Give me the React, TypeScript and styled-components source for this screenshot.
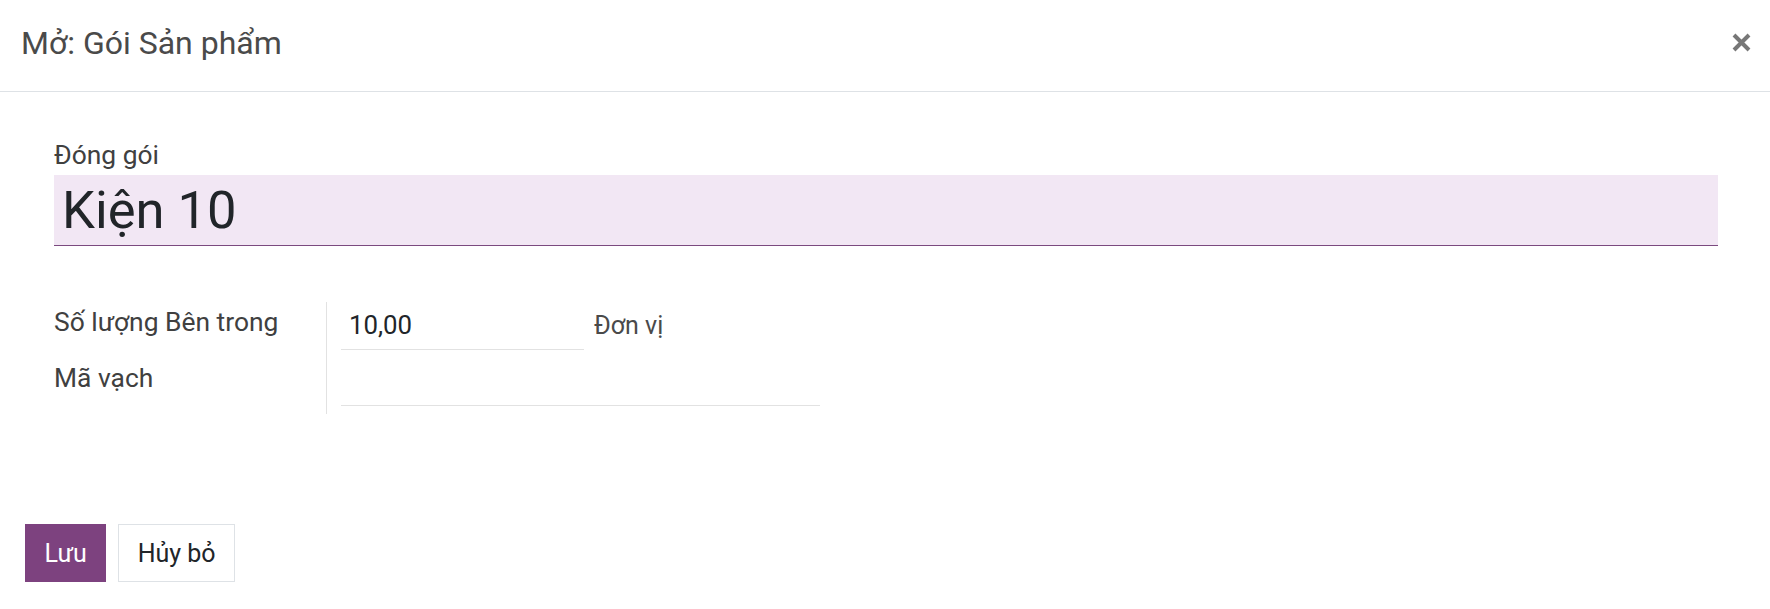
import React from "react";
import styled, { createGlobalStyle } from "styled-components";

const GlobalStyle = createGlobalStyle`
  html, body {
    margin: 0;
    padding: 0;
    background: #ffffff;
  }
  body {
    font-family: Roboto, "Noto Sans", "Liberation Sans", sans-serif;
    font-size: 25px;
    color: #212529;
  }
  * { box-sizing: border-box; }
`;

const Dialog = styled.div`
  width: 1770px;
  height: 609px;
  display: flex;
  flex-direction: column;
  background: #fff;
`;

const Header = styled.header`
  height: 92px;
  flex: none;
  display: flex;
  align-items: center;
  justify-content: space-between;
  padding: 0 19px 0 21px;
  border-bottom: 1px solid #dee2e6;
`;

const Title = styled.h4`
  margin: 0;
  font-size: 32px;
  font-weight: 400;
  line-height: 1.2;
  color: #4a4a4a;
  padding-bottom: 4px;
`;

const CloseButton = styled.button`
  border: 0;
  background: transparent;
  padding: 0;
  width: 19px;
  height: 19px;
  display: flex;
  align-items: center;
  justify-content: center;
  margin-bottom: 6px;
  cursor: pointer;
`;

const Body = styled.main`
  flex: 1;
  padding: 48px 52px 0 54px;
  display: flex;
  flex-direction: column;
`;

const FieldLabel = styled.label`
  display: block;
  font-size: 26.4px;
  font-weight: 400;
  line-height: 30px;
  color: #404040;
  margin-bottom: 5px;
`;

const TitleInput = styled.div`
  height: 71px;
  background: #f2e7f4;
  border-bottom: 1.5px solid #7b4a7f;
  display: flex;
  align-items: center;
  padding: 0 8px;
  font-size: 52.5px;
  line-height: 1;
  color: #212529;
`;

const Group = styled.div`
  margin-top: 56px;
  display: grid;
  grid-template-columns: 273px 1fr;
  width: 766px;
`;

const LabelColumn = styled.div`
  display: flex;
  flex-direction: column;
  border-right: 1px solid #e2e2e2;
`;

const ValueColumn = styled.div`
  display: flex;
  flex-direction: column;
  padding-left: 14px;
`;

const RowLabel = styled.div`
  height: 56px;
  padding-top: 5px;
  font-size: 26.4px;
  font-weight: 400;
  line-height: 30px;
  color: #404040;
`;

const ValueRow = styled.div`
  height: 56px;
  display: flex;
  align-items: flex-start;
`;

const Input = styled.div<{ $width: number }>`
  width: ${(p) => p.$width}px;
  height: 48px;
  border-bottom: 1px solid #e2e2e2;
  padding: 8px 8px 0;
  font-size: 25.8px;
  line-height: 30px;
  color: #212529;
`;

const Unit = styled.span`
  margin-left: 10px;
  padding-top: 9px;
  font-size: 25px;
  line-height: 30px;
  color: #4a4a4a;
`;

const Footer = styled.footer`
  flex: none;
  display: flex;
  gap: 12px;
  padding: 0 0 27px 25px;
`;

const Button = styled.button<{ $primary?: boolean }>`
  height: 58px;
  padding: 0 18.5px;
  font-family: Roboto, "Noto Sans", "Liberation Sans", sans-serif;
  font-size: 25px;
  line-height: 1;
  border: 1px solid ${(p) => (p.$primary ? "#7d427f" : "#dee2e6")};
  background: ${(p) => (p.$primary ? "#7d427f" : "#ffffff")};
  color: ${(p) => (p.$primary ? "#ffffff" : "#212529")};
  border-radius: 0;
  cursor: pointer;
`;

export default function App() {
  return (
    <>
      <GlobalStyle />
      <Dialog>
        <Header>
          <Title>Mở: Gói Sản phẩm</Title>
          <CloseButton aria-label="Đóng">
            <svg width="19" height="19" viewBox="0 0 19 19">
              <path d="M2 2 L17 17 M17 2 L2 17" stroke="#777" strokeWidth="4" />
            </svg>
          </CloseButton>
        </Header>
        <Body>
          <FieldLabel>Đóng gói</FieldLabel>
          <TitleInput>Kiện 10</TitleInput>
          <Group>
            <LabelColumn>
              <RowLabel>Số lượng Bên trong</RowLabel>
              <RowLabel>Mã vạch</RowLabel>
            </LabelColumn>
            <ValueColumn>
              <ValueRow>
                <Input $width={243}>10,00</Input>
                <Unit>Đơn vị</Unit>
              </ValueRow>
              <ValueRow>
                <Input $width={479} />
              </ValueRow>
            </ValueColumn>
          </Group>
        </Body>
        <Footer>
          <Button $primary>Lưu</Button>
          <Button>Hủy bỏ</Button>
        </Footer>
      </Dialog>
    </>
  );
}
